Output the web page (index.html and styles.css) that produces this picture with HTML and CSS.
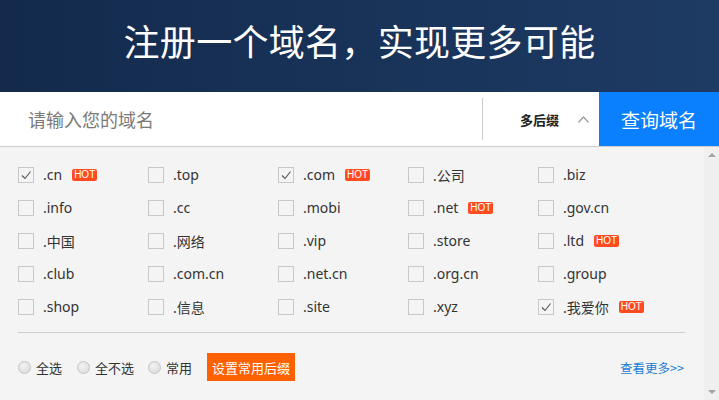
FILE: index.html
```html
<!DOCTYPE html>
<html lang="zh-CN">
<head>
  <meta charset="UTF-8">
  <title>注册域名</title>
  <link rel="stylesheet" href="styles.css">
</head>
<body>
<div class="banner">
  <h1>注册一个域名，实现更多可能</h1>
</div>

<div class="search">
  <div class="search-input">请输入您的域名</div>
  <div class="suffix-toggle">
    <span>多后缀</span>
    <svg class="caret" width="11" height="7" viewBox="0 0 11 7"><polyline points="0.5,6.5 5.5,1 10.5,6.5" fill="none" stroke="#999" stroke-width="1.2"/></svg>
  </div>
  <button class="search-btn">查询域名</button>
</div>

<div class="panel">
  <div class="panel-body">
    <div class="suffix-grid" id="suffixGrid"></div>
    <div class="divider"></div>
    <div class="actions">
      <label class="radio"><i></i>全选</label>
      <label class="radio"><i></i>全不选</label>
      <label class="radio"><i></i>常用</label>
      <button class="set-btn">设置常用后缀</button>
      <a class="more" href="#">查看更多&gt;&gt;</a>
    </div>
  </div>
  <div class="scrollbar">
    <span class="arrow up"></span>
    <span class="arrow down"></span>
  </div>
</div>

<script>
  const suffixes = [
    ['.cn', true, true], ['.top'], ['.com', true, true], ['.公司'], ['.biz'],
    ['.info'], ['.cc'], ['.mobi'], ['.net', false, true], ['.gov.cn'],
    ['.中国'], ['.网络'], ['.vip'], ['.store'], ['.ltd', false, true],
    ['.club'], ['.com.cn'], ['.net.cn'], ['.org.cn'], ['.group'],
    ['.shop'], ['.信息'], ['.site'], ['.xyz'], ['.我爱你', true, true]
  ];

  const tick = '<svg width="14" height="14" viewBox="0 0 14 14"><polyline points="3,7.5 6,10.5 11.5,3.5" fill="none" stroke="#555" stroke-width="1.1"/></svg>';

  const grid = document.getElementById('suffixGrid');
  suffixes.forEach(([name, checked, hot]) => {
    const item = document.createElement('div');
    item.className = 'suffix';
    item.innerHTML =
      '<span class="box">' + (checked ? tick : '') + '</span>' +
      '<span class="name">' + name + '</span>' +
      (hot ? '<span class="hot">HOT</span>' : '');
    grid.appendChild(item);
  });
</script>
</body>
</html>
```

FILE: styles.css
```css
:root {
  --blue: #0a80ff;
  --orange: #ff6000;
  --hot: #ff4b1f;
  --text: #333;
  --line: #ccc;
  --font: 'Noto Sans', 'Noto Sans CJK SC', sans-serif;
}

body {
  margin: 0;
  font-family: var(--font);
  background: #f4f4f4;
}

.banner {
  height: 92px;
  background: linear-gradient(90deg, #132a4c, #1e3b64);
  display: flex;
  align-items: center;
  justify-content: center;
}

.banner h1 {
  margin: 0 0 12px;
  color: #fff;
  font-family: 'Noto Sans CJK SC', sans-serif;
  font-size: 36px;
  font-weight: 400;
  letter-spacing: 0.3px;
}

.search {
  display: flex;
  height: 54px;
  background: #fff;
  border-bottom: 1px solid var(--line);
}

.search-input {
  flex: 1;
  display: flex;
  align-items: center;
  padding-left: 28px;
  font-family: 'Noto Sans CJK SC', sans-serif;
  font-size: 18px;
  color: #7a7a7a;
}

.suffix-toggle {
  width: 117px;
  margin: 6px 0;
  border-left: 1px solid #ccc;
  display: flex;
  align-items: center;
  padding-left: 37px;
  box-sizing: border-box;
  gap: 19px;
}

.suffix-toggle span {
  font-family: 'Noto Sans CJK SC', sans-serif;
  font-size: 13px;
  font-weight: 700;
  color: #222;
}

.caret {
  margin-top: 1px;
}

.search-btn {
  width: 120px;
  border: none;
  background: var(--blue);
  color: #fff;
  font-family: 'Noto Sans CJK SC', sans-serif;
  font-size: 19px;
  padding: 0;
}

.panel {
  display: flex;
  height: 253px;
}

.panel-body {
  flex: 1;
  padding: 11px 19px 0 18px;
}

.suffix-grid {
  display: grid;
  grid-template-columns: repeat(5, 130px);
}

.suffix {
  height: 33px;
  display: flex;
  align-items: center;
  font-size: 14px;
  color: var(--text);
}

.box {
  width: 14px;
  height: 14px;
  border: 1px solid #c8c8c8;
  display: flex;
  align-items: center;
  justify-content: center;
  margin-right: 9px;
}

.name {
  font-family: 'Noto Sans', 'Noto Sans CJK SC', sans-serif;
}

.hot {
  margin-left: 10px;
  background: var(--hot);
  color: #fff;
  font-family: 'Liberation Sans', sans-serif;
  font-size: 10px;
  line-height: 12px;
  height: 12px;
  padding: 0 2px;
  border-radius: 2px;
}

.divider {
  height: 1px;
  background: var(--line);
  margin-top: 9px;
}

.actions {
  display: flex;
  align-items: center;
  margin-top: 20px;
  height: 28px;
  font-family: 'Noto Sans CJK SC', sans-serif;
  font-size: 13px;
  color: var(--text);
}

.radio {
  display: flex;
  align-items: center;
  gap: 5px;
  margin-right: 15px;
}

.radio:nth-child(2) {
  margin-right: 14px;
}

.radio i {
  width: 11px;
  height: 11px;
  border-radius: 50%;
  border: 1px solid #c4c4c4;
  background: radial-gradient(circle at 40% 35%, #f2f2f2, #d8d8d8);
}

.set-btn {
  height: 28px;
  padding: 0 5px;
  border: none;
  background: var(--orange);
  color: #fff;
  font-family: 'Noto Sans CJK SC', sans-serif;
  font-size: 13px;
  margin-left: 0;
}

.more {
  margin-left: auto;
  margin-right: 1px;
  color: #1a7dd3;
  font-size: 12.5px;
  text-decoration: none;
}

.scrollbar {
  width: 15px;
  background: #efefef;
  display: flex;
  flex-direction: column;
  justify-content: space-between;
  align-items: center;
  padding: 6px 0 6px;
}

.arrow {
  width: 0;
  height: 0;
  border-left: 4px solid transparent;
  border-right: 4px solid transparent;
}

.arrow.up {
  border-bottom: 4px solid #a3a3a3;
}

.arrow.down {
  border-top: 4px solid #a3a3a3;
}
```
